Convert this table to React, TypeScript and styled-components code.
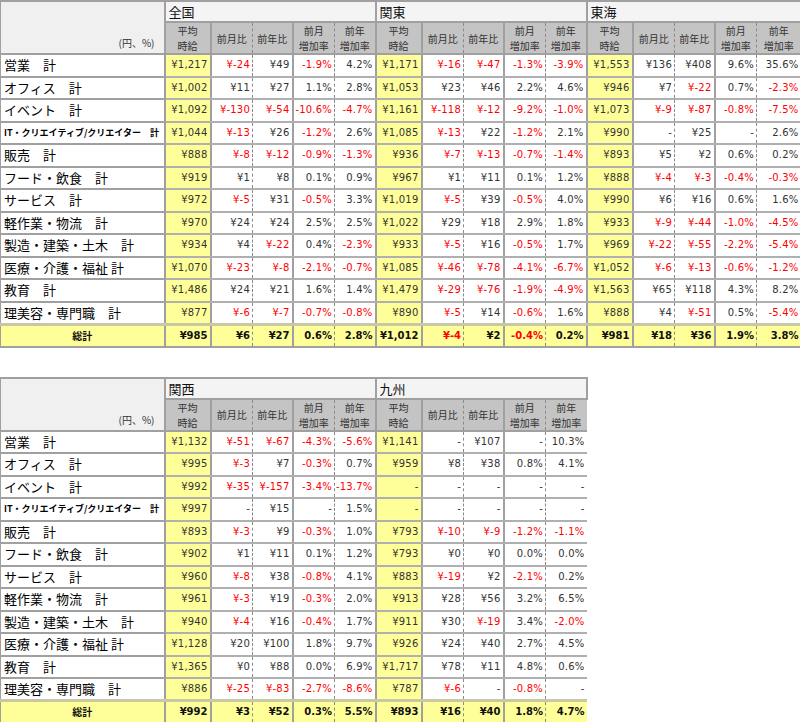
import React from "react";
import styled, { createGlobalStyle } from "styled-components";

type Region = { name: string; widths: number[]; rows: string[][] };

const LABELS = [
  "営業　計",
  "オフィス　計",
  "イベント　計",
  "IT・クリエイティブ/クリエイター　計",
  "販売　計",
  "フード・飲食　計",
  "サービス　計",
  "軽作業・物流　計",
  "製造・建築・土木　計",
  "医療・介護・福祉 計",
  "教育　計",
  "理美容・専門職　計",
];

const W = [46, 42, 40, 42, 41];

const firstTable: Region[] = [
  {
    name: "全国",
    widths: W,
    rows: [
      ["¥1,217", "¥-24", "¥49", "-1.9%", "4.2%"],
      ["¥1,002", "¥11", "¥27", "1.1%", "2.8%"],
      ["¥1,092", "¥-130", "¥-54", "-10.6%", "-4.7%"],
      ["¥1,044", "¥-13", "¥26", "-1.2%", "2.6%"],
      ["¥888", "¥-8", "¥-12", "-0.9%", "-1.3%"],
      ["¥919", "¥1", "¥8", "0.1%", "0.9%"],
      ["¥972", "¥-5", "¥31", "-0.5%", "3.3%"],
      ["¥970", "¥24", "¥24", "2.5%", "2.5%"],
      ["¥934", "¥4", "¥-22", "0.4%", "-2.3%"],
      ["¥1,070", "¥-23", "¥-8", "-2.1%", "-0.7%"],
      ["¥1,486", "¥24", "¥21", "1.6%", "1.4%"],
      ["¥877", "¥-6", "¥-7", "-0.7%", "-0.8%"],
      ["¥985", "¥6", "¥27", "0.6%", "2.8%"],
    ],
  },
  {
    name: "関東",
    widths: W,
    rows: [
      ["¥1,171", "¥-16", "¥-47", "-1.3%", "-3.9%"],
      ["¥1,053", "¥23", "¥46", "2.2%", "4.6%"],
      ["¥1,161", "¥-118", "¥-12", "-9.2%", "-1.0%"],
      ["¥1,085", "¥-13", "¥22", "-1.2%", "2.1%"],
      ["¥936", "¥-7", "¥-13", "-0.7%", "-1.4%"],
      ["¥967", "¥1", "¥11", "0.1%", "1.2%"],
      ["¥1,019", "¥-5", "¥39", "-0.5%", "4.0%"],
      ["¥1,022", "¥29", "¥18", "2.9%", "1.8%"],
      ["¥933", "¥-5", "¥16", "-0.5%", "1.7%"],
      ["¥1,085", "¥-46", "¥-78", "-4.1%", "-6.7%"],
      ["¥1,479", "¥-29", "¥-76", "-1.9%", "-4.9%"],
      ["¥890", "¥-5", "¥14", "-0.6%", "1.6%"],
      ["¥1,012", "¥-4", "¥2", "-0.4%", "0.2%"],
    ],
  },
  {
    name: "東海",
    widths: [46, 42, 40, 42, 44],
    rows: [
      ["¥1,553", "¥136", "¥408", "9.6%", "35.6%"],
      ["¥946", "¥7", "¥-22", "0.7%", "-2.3%"],
      ["¥1,073", "¥-9", "¥-87", "-0.8%", "-7.5%"],
      ["¥990", "-", "¥25", "-", "2.6%"],
      ["¥893", "¥5", "¥2", "0.6%", "0.2%"],
      ["¥888", "¥-4", "¥-3", "-0.4%", "-0.3%"],
      ["¥990", "¥6", "¥16", "0.6%", "1.6%"],
      ["¥933", "¥-9", "¥-44", "-1.0%", "-4.5%"],
      ["¥969", "¥-22", "¥-55", "-2.2%", "-5.4%"],
      ["¥1,052", "¥-6", "¥-13", "-0.6%", "-1.2%"],
      ["¥1,563", "¥65", "¥118", "4.3%", "8.2%"],
      ["¥888", "¥4", "¥-51", "0.5%", "-5.4%"],
      ["¥981", "¥18", "¥36", "1.9%", "3.8%"],
    ],
  },
];

const secondTable: Region[] = [
  {
    name: "関西",
    widths: W,
    rows: [
      ["¥1,132", "¥-51", "¥-67", "-4.3%", "-5.6%"],
      ["¥995", "¥-3", "¥7", "-0.3%", "0.7%"],
      ["¥992", "¥-35", "¥-157", "-3.4%", "-13.7%"],
      ["¥997", "-", "¥15", "-", "1.5%"],
      ["¥893", "¥-3", "¥9", "-0.3%", "1.0%"],
      ["¥902", "¥1", "¥11", "0.1%", "1.2%"],
      ["¥960", "¥-8", "¥38", "-0.8%", "4.1%"],
      ["¥961", "¥-3", "¥19", "-0.3%", "2.0%"],
      ["¥940", "¥-4", "¥16", "-0.4%", "1.7%"],
      ["¥1,128", "¥20", "¥100", "1.8%", "9.7%"],
      ["¥1,365", "¥0", "¥88", "0.0%", "6.9%"],
      ["¥886", "¥-25", "¥-83", "-2.7%", "-8.6%"],
      ["¥992", "¥3", "¥52", "0.3%", "5.5%"],
    ],
  },
  {
    name: "九州",
    widths: W,
    rows: [
      ["¥1,141", "-", "¥107", "-", "10.3%"],
      ["¥959", "¥8", "¥38", "0.8%", "4.1%"],
      ["-", "-", "-", "-", "-"],
      ["-", "-", "-", "-", "-"],
      ["¥793", "¥-10", "¥-9", "-1.2%", "-1.1%"],
      ["¥793", "¥0", "¥0", "0.0%", "0.0%"],
      ["¥883", "¥-19", "¥2", "-2.1%", "0.2%"],
      ["¥913", "¥28", "¥56", "3.2%", "6.5%"],
      ["¥911", "¥30", "¥-19", "3.4%", "-2.0%"],
      ["¥926", "¥24", "¥40", "2.7%", "4.5%"],
      ["¥1,717", "¥78", "¥11", "4.8%", "0.6%"],
      ["¥787", "¥-6", "-", "-0.8%", "-"],
      ["¥893", "¥16", "¥40", "1.8%", "4.7%"],
    ],
  },
];

const HEADS: React.ReactNode[] = [
  <>平均<br />時給</>,
  "前月比",
  "前年比",
  <>前月<br />増加率</>,
  <>前年<br />増加率</>,
];

// separators inside a region: solid, solid, dashed, solid, dashed
const DASHED = [false, false, true, false, true];

const isNeg = (v: string) => /^(¥)?-\d/.test(v);

const GlobalStyle = createGlobalStyle`
  body {
    margin: 0;
    background: #ffffff;
  }
`;

const Page = styled.div`
  display: flex;
  flex-direction: column;
  align-items: flex-start;
  gap: 29px;
`;

const Sheet = styled.table`
  border-collapse: collapse;
  table-layout: fixed;
  font-family: "DejaVu Sans", sans-serif;
  font-size: 10px;
  color: #333333;
`;

const HeadCorner = styled.th`
  background: #f0f0f0;
  border: 2px solid #a0a0a0;
  border-left: 1px solid #a0a0a0;
  vertical-align: bottom;
  text-align: right;
  padding: 0 9px 3px 0;
  font-family: "Noto Sans CJK JP", sans-serif;
  font-weight: normal;
  font-size: 10px;
  line-height: 14px;
  color: #333333;
`;

const RegionTh = styled.th`
  height: 19px;
  background: #f4f4f4;
  border: 2px solid #a0a0a0;
  text-align: left;
  padding: 0 0 0 3px;
  font-family: "Noto Sans CJK JP", sans-serif;
  font-weight: normal;
  font-size: 13px;
  line-height: 17px;
  color: #111111;
`;

const SubTh = styled.th<{ $dashed: boolean }>`
  height: 30px;
  background: #c4c4c4;
  border-top: 2px solid #a0a0a0;
  border-bottom: 2px solid #a0a0a0;
  border-left: ${(p) => (p.$dashed ? "1px dashed #8a8a8a" : "2px solid #a0a0a0")};
  padding: 0;
  text-align: center;
  vertical-align: middle;
  font-family: "Noto Sans CJK JP", sans-serif;
  font-weight: normal;
  font-size: 10px;
  line-height: 15px;
  color: #333333;
`;

const DataRow = styled.tr`
  height: 22.5px;
`;

const LabelTd = styled.td<{ $small?: boolean }>`
  background: #ffffff;
  border-top: 2px solid #a0a0a0;
  border-bottom: 2px solid #a0a0a0;
  border-left: 1px solid #a0a0a0;
  padding: 0 0 0 3px;
  white-space: nowrap;
  overflow: hidden;
  font-family: "Noto Sans CJK JP", sans-serif;
  font-size: ${(p) => (p.$small ? "9px" : "13px")};
  font-weight: ${(p) => (p.$small ? "bold" : "normal")};
  line-height: 16px;
  color: #000000;
`;

const ValueTd = styled.td<{ $avg: boolean; $dashed: boolean; $neg: boolean }>`
  background: ${(p) => (p.$avg ? "#ffff99" : "#ffffff")};
  border-top: 2px solid #b0b0b0;
  border-bottom: 2px solid #b0b0b0;
  border-left: ${(p) => (p.$dashed ? "1px dashed #8a8a8a" : "2px solid #a0a0a0")};
  padding: 0 2px 0 0;
  text-align: right;
  white-space: nowrap;
  letter-spacing: 0.2px;
  line-height: 14px;
  color: ${(p) => (p.$neg ? "#ff0000" : "#333333")};
`;

const TotalRow = styled.tr`
  height: 22.5px;
  & > td {
    background: #ffff99;
    border-top: 3px solid #c8c8a4;
    border-bottom: 2px solid #a0a0a0;
    font-weight: bold;
    line-height: 14px;
  }
`;

const TotalLabel = styled.td`
  border-left: 1px solid #a0a0a0;
  text-align: center;
  font-family: "Noto Sans CJK JP", sans-serif;
  font-size: 10px;
  color: #111111;
`;

const TotalValue = styled.td<{ $dashed: boolean; $neg: boolean }>`
  border-left: ${(p) => (p.$dashed ? "1px dashed #8a8a8a" : "2px solid #a0a0a0")};
  padding: 0 2px 0 0;
  text-align: right;
  white-space: nowrap;
  color: ${(p) => (p.$neg ? "#ff0000" : "#111111")};
`;

const WageTable: React.FC<{ regions: Region[] }> = ({ regions }) => {
  const total = 164 + regions.reduce((s, r) => s + r.widths.reduce((a, b) => a + b, 0), 0);
  return (
    <Sheet style={{ width: total }}>
      <colgroup>
        <col style={{ width: 164 }} />
        {regions.map((r) => r.widths.map((w, i) => <col key={r.name + i} style={{ width: w }} />))}
      </colgroup>
      <thead>
        <tr>
          <HeadCorner rowSpan={2}>(円、%)</HeadCorner>
          {regions.map((r) => (
            <RegionTh key={r.name} colSpan={5}>
              {r.name}
            </RegionTh>
          ))}
        </tr>
        <tr>
          {regions.map((r) =>
            HEADS.map((h, i) => (
              <SubTh key={r.name + i} $dashed={DASHED[i]}>
                {h}
              </SubTh>
            ))
          )}
        </tr>
      </thead>
      <tbody>
        {LABELS.map((label, row) => (
          <DataRow key={label}>
            <LabelTd $small={row === 3}>{label}</LabelTd>
            {regions.map((r) =>
              r.rows[row].map((v, i) => (
                <ValueTd key={r.name + i} $avg={i === 0} $dashed={DASHED[i]} $neg={isNeg(v)}>
                  {v}
                </ValueTd>
              ))
            )}
          </DataRow>
        ))}
        <TotalRow>
          <TotalLabel>総計</TotalLabel>
          {regions.map((r) =>
            r.rows[12].map((v, i) => (
              <TotalValue key={r.name + i} $dashed={DASHED[i]} $neg={isNeg(v)}>
                {v}
              </TotalValue>
            ))
          )}
        </TotalRow>
      </tbody>
    </Sheet>
  );
};

export default function App() {
  return (
    <>
      <GlobalStyle />
      <Page>
        <WageTable regions={firstTable} />
        <WageTable regions={secondTable} />
      </Page>
    </>
  );
}
